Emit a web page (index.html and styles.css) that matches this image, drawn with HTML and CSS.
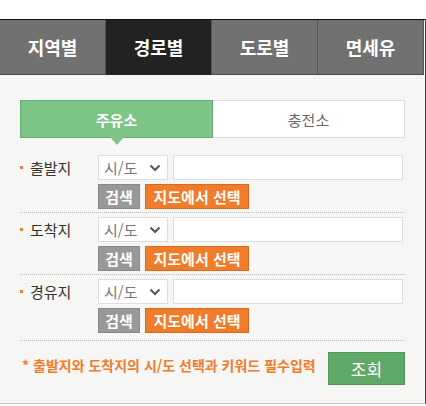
FILE: index.html
```html
<!DOCTYPE html>
<html lang="ko">
<head>
<meta charset="utf-8">
<link rel="stylesheet" href="styles.css">
</head>
<body>
<div class="wrap">
  <div class="box">
    <div class="tabs">
      <div class="tab">지역별</div>
      <div class="tab active">경로별</div>
      <div class="tab">도로별</div>
      <div class="tab">면세유</div>
    </div>
    <div class="panel">
      <div class="seg">
        <div class="seg-item on">주유소</div>
        <div class="seg-item">충전소</div>
      </div>

      <div class="row first">
        <div class="label"><span class="dot"></span>출발지</div>
        <div class="ctrls">
          <div class="line">
            <div class="sel">시/도<svg class="chev" width="12" height="8" viewBox="0 0 12 8"><path d="M1.5 1.5 L6 6 L10.5 1.5" fill="none" stroke="#555" stroke-width="2"/></svg></div>
            <div class="inp"></div>
          </div>
          <div class="line">
            <span class="btn gray">검색</span>
            <span class="btn orange">지도에서 선택</span>
          </div>
        </div>
      </div>

      <div class="row">
        <div class="label"><span class="dot"></span>도착지</div>
        <div class="ctrls">
          <div class="line">
            <div class="sel">시/도<svg class="chev" width="12" height="8" viewBox="0 0 12 8"><path d="M1.5 1.5 L6 6 L10.5 1.5" fill="none" stroke="#555" stroke-width="2"/></svg></div>
            <div class="inp"></div>
          </div>
          <div class="line">
            <span class="btn gray">검색</span>
            <span class="btn orange">지도에서 선택</span>
          </div>
        </div>
      </div>

      <div class="row last">
        <div class="label"><span class="dot"></span>경유지</div>
        <div class="ctrls">
          <div class="line">
            <div class="sel">시/도<svg class="chev" width="12" height="8" viewBox="0 0 12 8"><path d="M1.5 1.5 L6 6 L10.5 1.5" fill="none" stroke="#555" stroke-width="2"/></svg></div>
            <div class="inp"></div>
          </div>
          <div class="line">
            <span class="btn gray">검색</span>
            <span class="btn orange">지도에서 선택</span>
          </div>
        </div>
      </div>

      <div class="foot">
        <div class="note">* 출발지와 도착지의 시/도 선택과 키워드 필수입력</div>
        <div class="go">조회</div>
      </div>
    </div>
  </div>
</div>
</body>
</html>
```

FILE: styles.css
```css
* { box-sizing: border-box; }
html, body { margin: 0; padding: 0; background: #fff; }
body { font-family: "Noto Sans CJK KR", "Noto Sans", sans-serif; }

.wrap { padding-top: 19px; width: 426px; }
.box {
  width: 426px;
  border-top: 1px solid #111;
  border-right: 1px solid #444;
  border-bottom: 1px solid #c8c8c8;
  background: #f6f6f4;
}

.tabs { display: grid; grid-template-columns: repeat(4, 106px); }
.tab {
  height: 55px;
  background: #717171;
  border-right: 1px solid #555;
  border-bottom: 1px solid #4a4a4a;
  color: #fff;
  font-size: 18px;
  font-weight: 700;
  display: flex;
  align-items: center;
  justify-content: center;
}
.tab.active { background: #222; border-bottom-color: #222; }

.panel { padding: 25px 20px 18px; }

.seg { display: flex; height: 38px; }
.seg-item {
  flex: 1;
  display: flex;
  align-items: center;
  justify-content: center;
  font-size: 15px;
  color: #666;
  background: #fff;
  border: 1px solid #ddd;
  border-left: none;
  position: relative;
}
.seg-item.on {
  background: #7dc487;
  border: 1px solid #63ad6d;
  color: #fff;
  font-weight: 700;
}
.seg-item.on::after {
  content: "";
  position: absolute;
  left: 50%;
  bottom: -8px;
  margin-left: -7px;
  border-left: 7px solid transparent;
  border-right: 7px solid transparent;
  border-top: 8px solid #7dc487;
}

.row {
  display: flex;
  padding: 4px 0 3px;
  border-bottom: 1px dotted #bbb;
}
.row.first { margin-top: 13px; }
.row.last { padding-bottom: 7px; }

.label {
  width: 78px;
  height: 25px;
  display: flex;
  align-items: center;
  font-size: 15px;
  color: #333;
}
.dot {
  width: 3px;
  height: 3px;
  background: #f07c2a;
  margin-right: 7px;
}

.ctrls { display: flex; flex-direction: column; gap: 4px; }
.line { display: flex; gap: 5px; }

.sel {
  width: 70px;
  height: 25px;
  background: #fff;
  border: 1px solid #ddd;
  font-size: 15px;
  color: #777;
  display: flex;
  align-items: center;
  justify-content: space-between;
  padding: 0 6px 0 5px;
}
.inp {
  width: 230px;
  height: 25px;
  background: #fff;
  border: 1px solid #ddd;
}

.btn {
  height: 25px;
  display: inline-flex;
  align-items: center;
  justify-content: center;
  color: #fff;
  font-size: 15px;
  font-weight: 700;
}
.btn.gray { width: 42px; background: #999; border: 1px solid #888; }
.btn.orange { width: 104px; background: #f07c2a; border: 1px solid #d96a1e; }

.foot {
  display: flex;
  justify-content: space-between;
  align-items: flex-start;
  padding-top: 11px;
}
.note {
  font-size: 14px;
  font-weight: 700;
  color: #f07c2a;
  padding: 3px 0 0 2px;
}
.go {
  width: 77px;
  height: 33px;
  background: #5fa868;
  border: 1px solid #4f9558;
  color: #fff;
  font-size: 17px;
  display: flex;
  align-items: center;
  justify-content: center;
}
```
